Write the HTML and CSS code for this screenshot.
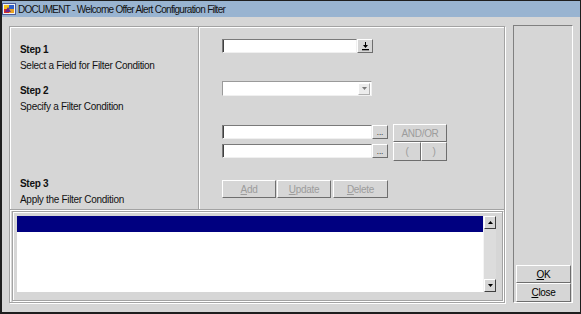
FILE: index.html
```html
<!DOCTYPE html>
<html lang="en">
<head>
    <meta charset="UTF-8">
    <title>DOCUMENT - Welcome Offer Alert Configuration Filter</title>
    <link rel="stylesheet" href="styles.css">
</head>
<body>
    <div class="window">
        <div class="titlebar">
            <svg class="app-icon" width="14" height="14" viewBox="0 0 14 14">
                <rect x="0.5" y="1.5" width="13" height="11" fill="#f4f4f4" stroke="#4a5a9a"/>
                <rect x="2" y="3" width="5" height="4" fill="#f2c21a"/>
                <rect x="7" y="3" width="5" height="4" fill="#2f5fc8"/>
                <rect x="2" y="7" width="5" height="4" fill="#d22a2a"/>
                <rect x="7" y="7" width="5" height="4" fill="#e8a020"/>
                <path d="M3 10 L6 5 L9 10 Z" fill="#6a2a8a"/>
            </svg>
            <span class="title">DOCUMENT - Welcome Offer Alert Configuration Filter</span>
        </div>

        <div class="client">
            <div class="main">
                <div class="top">
                    <div class="steps">
                        <div class="step">
                            <b>Step 1</b>
                            <p>Select a Field for Filter Condition</p>
                        </div>
                        <div class="step step-2">
                            <b>Step 2</b>
                            <p>Specify a Filter Condition</p>
                        </div>
                        <div class="step step-3">
                            <b>Step 3</b>
                            <p>Apply the Filter Condition</p>
                        </div>
                    </div>

                    <div class="controls">
                        <div class="row row-field">
                            <div class="input field-input"></div>
                            <button class="btn btn-small">
                                <svg width="7" height="9" viewBox="0 0 7 9">
                                    <path d="M3 0h1v3h2L3.5 6 1 3h2z" fill="#000"/>
                                    <rect x="0" y="7" width="7" height="1.3" fill="#000"/>
                                </svg>
                            </button>
                        </div>

                        <div class="row row-combo">
                            <div class="input combo">
                                <span class="combo-arrow">
                                    <svg width="5" height="3" viewBox="0 0 5 3"><path d="M0 0h5L2.5 3z" fill="#7a7a7a"/></svg>
                                </span>
                            </div>
                        </div>

                        <div class="row row-cond">
                            <div class="cond-inputs">
                                <div class="row">
                                    <div class="input cond-input"></div>
                                    <button class="btn btn-small btn-dots">...</button>
                                </div>
                                <div class="row">
                                    <div class="input cond-input"></div>
                                    <button class="btn btn-small btn-dots">...</button>
                                </div>
                            </div>
                            <div class="logic">
                                <button class="btn disabled btn-andor">AND/OR</button>
                                <div class="parens">
                                    <button class="btn disabled btn-open">(</button>
                                    <button class="btn disabled btn-close">)</button>
                                </div>
                            </div>
                        </div>

                        <div class="row actions">
                            <button class="btn disabled btn-add"><u>A</u>dd</button>
                            <button class="btn disabled btn-update"><u>U</u>pdate</button>
                            <button class="btn disabled btn-delete"><u>D</u>elete</button>
                        </div>
                    </div>
                </div>

                <div class="list-section">
                    <div class="listbox">
                        <div class="list-rows">
                            <div class="list-row selected"></div>
                        </div>
                        <div class="scrollbar">
                            <div class="scroll-btn">
                                <svg width="5" height="3" viewBox="0 0 5 3"><path d="M0 3h5L2.5 0z" fill="#000"/></svg>
                            </div>
                            <div class="scroll-track"></div>
                            <div class="scroll-btn">
                                <svg width="5" height="3" viewBox="0 0 5 3"><path d="M0 0h5L2.5 3z" fill="#000"/></svg>
                            </div>
                        </div>
                    </div>
                </div>
            </div>

            <div class="side">
                <div class="side-fill"></div>
                <button class="btn btn-ok"><u>O</u>K</button>
                <button class="btn btn-cancel"><u>C</u>lose</button>
            </div>
        </div>
    </div>
</body>
</html>
```

FILE: styles.css
```css
* {
    box-sizing: border-box;
}
body {
    margin: 0;
    font-family: 'Liberation Sans', Arial, sans-serif;
    font-size: 10px;
    color: #000;
    background-color: #d6d6d6;
}
.window {
    width: 581px;
    height: 314px;
    border: solid #1e1e1e;
    border-width: 1px 1px 2px 2px;
    display: flex;
    flex-direction: column;
    background-color: #d6d6d6;
}
.titlebar {
    height: 16px;
    background-color: #99b4d1;
    display: flex;
    align-items: center;
    gap: 2px;
}
.app-icon {
    display: block;
}
.title {
    font-size: 10px;
    letter-spacing: -0.7px;
    color: #111;
}
.client {
    flex: 1;
    display: flex;
    gap: 8px;
    padding: 9px 7px 9px 7px;
}
.main {
    width: 496px;
    border: 1px solid #a3a3a3;
    box-shadow: inset 1px 1px 0 #fff, 1px 1px 0 #fff;
    display: flex;
    flex-direction: column;
}
.top {
    height: 183px;
    display: flex;
    border-bottom: 1px solid #a3a3a3;
    box-shadow: 0 1px 0 #fff;
}
.steps {
    width: 189px;
    padding: 15px 0 0 10px;
    border-right: 1px solid #a3a3a3;
    letter-spacing: -0.3px;
    line-height: 16px;
    color: #111;
}
.step b {
    display: block;
}
.step p {
    margin: 0;
}
.step-2 {
    margin-top: 9px;
}
.step-3 {
    margin-top: 61px;
}
.controls {
    flex: 1;
    border-left: 1px solid #fff;
    padding: 12px 0 0 22px;
}
.row {
    display: flex;
}
.input {
    height: 14px;
    background-color: #fff;
    border: 1px solid;
    border-color: #7a7a7a #f0f0f0 #f0f0f0 #7a7a7a;
    box-shadow: inset 1px 0 0 #404040;
}
.field-input {
    width: 135px;
}
.row-combo {
    margin-top: 28px;
}
.combo {
    width: 150px;
    height: 15px;
    display: flex;
    justify-content: flex-end;
    align-items: center;
    padding-right: 1px;
    box-shadow: none;
    border-color: #9a9a9a #f0f0f0 #f0f0f0 #9a9a9a;
}
.combo-arrow {
    width: 12px;
    height: 12px;
    background-color: #ececec;
    border: 1px solid;
    border-color: #fff #b0b0b0 #b0b0b0 #fff;
    display: flex;
    align-items: center;
    justify-content: center;
}
.combo-arrow svg, .btn svg, .scroll-btn svg {
    display: block;
}
.row-cond {
    margin-top: 28px;
    gap: 5px;
}
.cond-inputs {
    padding-top: 1px;
    display: flex;
    flex-direction: column;
    gap: 5px;
}
.cond-input {
    width: 150px;
}
.btn {
    font-family: 'Liberation Sans', Arial, sans-serif;
    font-size: 10px;
    letter-spacing: -0.3px;
    color: #000;
    background-color: #d6d6d6;
    border: 1px solid;
    border-color: #fff #6e6e6e #6e6e6e #fff;
    padding: 0;
    margin: 0;
    display: flex;
    align-items: center;
    justify-content: center;
}
.btn.disabled {
    color: #9c9c9c;
}
.btn u {
    text-decoration: underline;
}
.btn-small {
    width: 16px;
    height: 14px;
}
.btn-dots {
    align-items: flex-end;
    line-height: 8px;
    padding-bottom: 1px;
    letter-spacing: 0;
    font-size: 8px;
}
.logic {
    width: 54px;
    display: flex;
    flex-direction: column;
}
.btn-andor {
    height: 18px;
    width: 54px;
}
.parens {
    display: flex;
}
.btn-open {
    width: 28px;
    height: 19px;
}
.btn-close {
    width: 26px;
    height: 19px;
}
.actions {
    margin-top: 19px;
    gap: 1px;
}
.actions .btn {
    width: 54px;
    height: 18px;
}
.actions .btn-delete {
    width: 55px;
    margin-left: 1px;
}
.list-section {
    margin: 1px 1px 0 2px;
    height: 90px;
    padding: 4px 6px 7px 4px;
    border: 1px solid #a3a3a3;
    box-shadow: inset 1px 1px 0 #fff, 1px 1px 0 #fff;
}
.listbox {
    height: 76px;
    display: flex;
}
.list-rows {
    flex: 1;
    background-color: #fff;
}
.list-row {
    height: 16px;
}
.list-row.selected {
    background-color: #000080;
}
.scrollbar {
    width: 13px;
    display: flex;
    flex-direction: column;
    background-color: #dcdcdc;
    border-left: 1px solid #f4f4f4;
}
.scroll-btn {
    height: 13px;
    background-color: #d6d6d6;
    border: 1px solid;
    border-color: #fff #404040 #404040 #fff;
    display: flex;
    align-items: center;
    justify-content: center;
}
.scroll-track {
    flex: 1;
}
.side {
    width: 60px;
    margin-top: -1px;
    border: 1px solid;
    border-color: #808080 #fff #fff #808080;
    padding: 0 1px 0 2px;
    display: flex;
    flex-direction: column;
}
.side-fill {
    flex: 1;
}
.side .btn {
    width: 55px;
    font-size: 10px;
}
.btn-ok {
    height: 18px;
}
.btn-cancel {
    height: 19px;
}
```
